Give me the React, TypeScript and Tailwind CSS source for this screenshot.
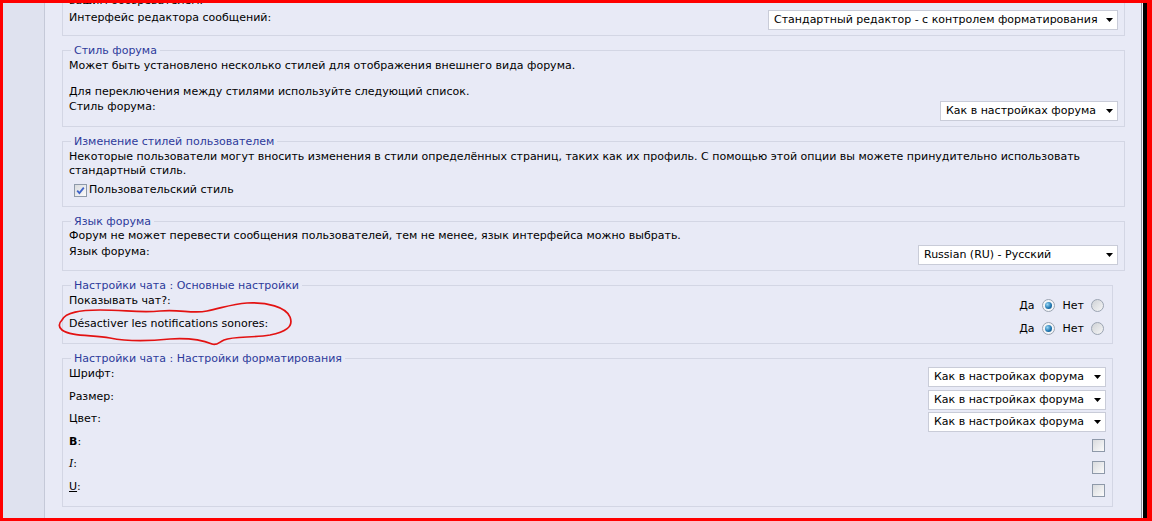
import React from 'react';

// --- small form controls, drawn to look like the XP-era widgets in the shot ---
const Select = ({ value, className }: { value: string; className: string }) => (
  <div
    className={`flex h-[20px] shrink-0 items-center justify-between border border-[#c9ccd8] bg-white pl-[5px] pr-[4px] text-[11px] leading-[14px] text-black ${className}`}
  >
    <span className="whitespace-nowrap">{value}</span>
    <svg width="7" height="4" viewBox="0 0 7 4" className="ml-[6px] shrink-0">
      <path d="M0 0h7L3.5 4z" fill="#000" />
    </svg>
  </div>
);

const Radio = ({ checked }: { checked?: boolean }) => (
  <span
    className={`flex h-[13px] w-[13px] shrink-0 items-center justify-center rounded-full border border-[#9ba4b2] ${
      checked ? 'bg-[#f4f6f8]' : 'bg-gradient-to-br from-[#cfd2d6] to-[#f6f6f6]'
    }`}
  >
    {checked && (
      <span className="h-[7px] w-[7px] rounded-full bg-[radial-gradient(circle_at_35%_35%,#9bd8f5,#2279b3_55%,#0c4676)]" />
    )}
  </span>
);

const Checkbox = ({ checked }: { checked?: boolean }) => (
  <span className="flex h-[13px] w-[13px] shrink-0 items-center justify-center border border-[#8e99a9] bg-gradient-to-br from-[#d9dbde] to-[#fbfbfb]">
    {checked && (
      <svg width="9" height="9" viewBox="0 0 9 9">
        <path d="M1.2 4.6 L3.4 7 L7.8 1.6" stroke="#3f63c8" strokeWidth="1.8" fill="none" />
      </svg>
    )}
  </span>
);

const Fieldset = ({
  legend,
  className,
  children,
}: {
  legend: string;
  className: string;
  children: React.ReactNode;
}) => (
  <fieldset className={`border border-[#d3d6e4] px-[6px] ${className}`}>
    <legend className="ml-[2px] px-[3px] text-[11px] leading-[13px] text-[#2d3a9b]">{legend}</legend>
    {children}
  </fieldset>
);

const FormatRow = ({ label, children }: { label: React.ReactNode; children: React.ReactNode }) => (
  <div className="flex h-[22.5px] items-start justify-between">
    <span className="leading-[14px]">{label}</span>
    {children}
  </div>
);

export default function App() {
  return (
    <div className="relative h-[521px] w-[1152px] overflow-hidden font-['DejaVu_Sans',Verdana,sans-serif] text-[11px] text-black">
      <div className="flex h-full w-full border-t-[3px] border-b-[3px] border-l-[3px] border-r-[5px] border-[#ff0000] bg-[#e8eaf6]">
        {/* left gutter */}
        <div className="w-[42px] shrink-0 border-r border-[#c5c9d8] bg-[#dfe2ef]" />

        {/* settings column */}
        <div className="flex min-w-0 flex-1 flex-col overflow-hidden pl-[17px] pr-[16px]">
          {/* cut-off block at the top */}
          <div className="-mt-[9px] border-x border-b border-[#d3d6e4] px-[6px] pb-[5px]">
            <div className="leading-[14px]">вашим обозревателем.</div>
            <div className="flex items-start justify-between">
              <span className="mt-[3px] leading-[14px]">Интерфейс редактора сообщений:</span>
              <Select value="Стандартный редактор - с контролем форматирования" className="mt-[2px] w-[350px]" />
            </div>
          </div>

          <Fieldset legend="Стиль форума" className="mt-[8px] pt-[2px] pb-[5px]">
            <div className="leading-[13px]">
              Может быть установлено несколько стилей для отображения внешнего вида форума.
              <br />
              <br />
              Для переключения между стилями используйте следующий список.
            </div>
            <div className="flex items-start justify-between">
              <span className="mt-[2px] leading-[14px]">Стиль форума:</span>
              <Select value="Как в настройках форума" className="mt-[3px] w-[178px]" />
            </div>
          </Fieldset>

          <Fieldset legend="Изменение стилей пользователем" className="mt-[8px] pt-[2px] pb-[9px]">
            <div className="leading-[14px]">
              Некоторые пользователи могут вносить изменения в стили определённых страниц, таких как их профиль. С помощью
              этой опции вы можете принудительно использовать
              <br />
              стандартный стиль.
            </div>
            <label className="mt-[5px] ml-[5px] flex items-center gap-[2px] leading-[14px]">
              <Checkbox checked />
              <span>Пользовательский стиль</span>
            </label>
          </Fieldset>

          <Fieldset legend="Язык форума" className="mt-[8px] pt-[1px] pb-[5px]">
            <div className="leading-[14px]">
              Форум не может перевести сообщения пользователей, тем не менее, язык интерфейса можно выбрать.
            </div>
            <div className="flex items-start justify-between">
              <span className="mt-[2px] leading-[14px]">Язык форума:</span>
              <Select value="Russian (RU) - Русский" className="mt-[2px] w-[200px]" />
            </div>
          </Fieldset>

          <Fieldset legend="Настройки чата : Основные настройки" className="mt-[8px] mr-[12px] pt-[2px] pb-[3px]">
            {['Показывать чат?:', 'Désactiver les notifications sonores:'].map((label) => (
              <div key={label} className="flex h-[23px] items-start justify-between">
                <span className="leading-[14px]">{label}</span>
                <div className="mt-[5px] mr-[2px] flex h-[13px] items-center leading-[13px]">
                  <span>Да</span>
                  <span className="ml-[7px]">
                    <Radio checked />
                  </span>
                  <span className="ml-[8px]">Нет</span>
                  <span className="ml-[7px]">
                    <Radio />
                  </span>
                </div>
              </div>
            ))}
          </Fieldset>

          <Fieldset legend="Настройки чата : Настройки форматирования" className="mt-[8px] mr-[12px] pt-[2px] pb-[4px]">
            <FormatRow label="Шрифт:">
              <Select value="Как в настройках форума" className="w-[178px]" />
            </FormatRow>
            <FormatRow label="Размер:">
              <Select value="Как в настройках форума" className="w-[178px]" />
            </FormatRow>
            <FormatRow label="Цвет:">
              <Select value="Как в настройках форума" className="w-[178px]" />
            </FormatRow>
            <FormatRow label={<><b>B</b>:</>}>
              <span className="mt-[4px] mr-[1px]">
                <Checkbox />
              </span>
            </FormatRow>
            <FormatRow label={<><i className="font-['DejaVu_Serif',serif]">I</i>:</>}>
              <span className="mt-[4px] mr-[1px]">
                <Checkbox />
              </span>
            </FormatRow>
            <FormatRow label={<><u>U</u>:</>}>
              <span className="mt-[4px] mr-[1px]">
                <Checkbox />
              </span>
            </FormatRow>
          </Fieldset>
        </div>

        {/* right window edge */}
        <div className="w-[1px] shrink-0 bg-[#8c8f99]" />
        <div className="w-[1px] shrink-0 bg-[#f2f3f8]" />
        <div className="w-[4px] shrink-0 bg-black" />
      </div>

      {/* hand-drawn red ring over the screenshot */}
      <svg className="pointer-events-none absolute left-0 top-0" width="1152" height="521" viewBox="0 0 1152 521">
        <path
          d="M62 320 C66 312 80 310 100 310 C125 310 140 313 160 311 C180 309 192 314 207 311 C222 308 232 304 247 303 C267 302 286 307 290 317 C294 327 285 332 270 335 C252 338 234 336 224 340 C219 342 217 346 212 344 C202 340 186 338 170 339 C150 341 130 342 110 338 C90 335 70 336 62 330 C58 327 59 323 62 320 Z"
          fill="none"
          stroke="#e31212"
          strokeWidth="1.7"
          strokeLinejoin="round"
        />
      </svg>
    </div>
  );
}
